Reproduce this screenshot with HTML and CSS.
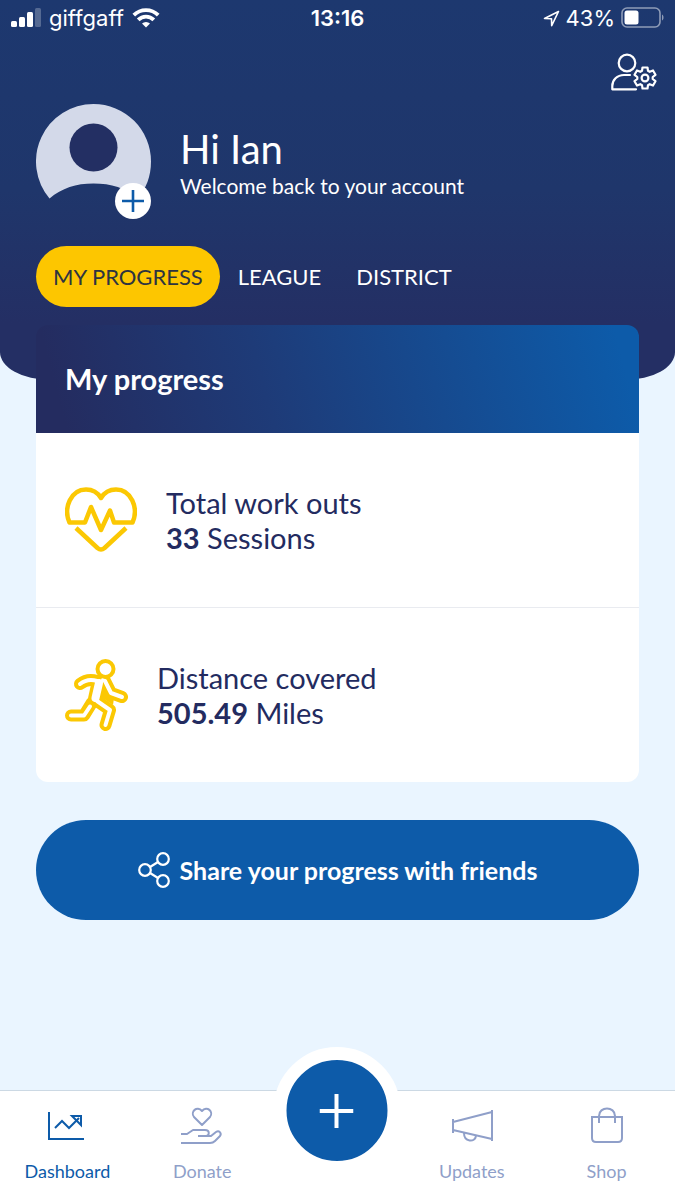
FILE: index.html
```html
<!DOCTYPE html>
<html lang="en">
  <head>
    <meta charset="utf-8">
    <meta name="viewport" content="width=device-width, initial-scale=1">
    <title>My progress</title>
    <link rel="stylesheet" href="styles.css">
  </head>
  <body>
    <header class="hero">
      <div class="status-bar">
        <div class="status-left">
          <svg width="30" height="20" viewBox="0 0 30 20" fill="#fff">
            <rect x="0" y="13" width="6" height="6" rx="1.5" />
            <rect x="8" y="9" width="6" height="10" rx="1.5" />
            <rect x="16" y="4" width="6" height="15" rx="1.5" />
            <rect x="24" y="0" width="6" height="19" rx="1.5" opacity="0.25" />
          </svg>
          <span>giffgaff</span>
          <svg width="28" height="20" viewBox="0 0 28 20" fill="none" stroke="#fff" stroke-width="3.8">
            <path d="M1.8 7.2a17.3 17.3 0 0 1 24.4 0" />
            <path d="M6.2 11.8a11 11 0 0 1 15.6 0" />
            <path d="M14 19.6l-4-4a5.7 5.7 0 0 1 8 0z" fill="#fff" stroke="none" />
          </svg>
        </div>
        <span class="clock">13:16</span>
        <div class="status-right">
          <svg width="17" height="17" viewBox="0 0 17 17" fill="none" stroke="#fff" stroke-width="1.6" stroke-linejoin="round">
            <path d="M15.5 1.5L1.5 8.5l7 .2.2 7z" />
          </svg>
          <span>43%</span>
          <svg width="43" height="22" viewBox="0 0 43 22" fill="none">
            <rect x="1" y="1" width="38" height="19" rx="5" stroke="#fff" stroke-opacity="0.5" stroke-width="1.6" />
            <rect x="3.5" y="3.5" width="14" height="14" rx="2.5" fill="#fff" />
            <path d="M41 7.5c2 1 2 5 0 6z" fill="#fff" fill-opacity="0.5" />
          </svg>
        </div>
      </div>

      <div class="toolbar">
        <button class="icon-button" type="button" aria-label="Account settings">
          <svg width="46" height="38" viewBox="0 0 46 38" fill="none" stroke="#fff" stroke-width="2.2" stroke-linecap="round" stroke-linejoin="round">
            <circle cx="16" cy="10" r="8.3" />
            <path d="M19 22h-6C6 22 1.3 27 1.3 33v3.3H25" />
            <path transform="translate(34 25)" d="M-2.5-10.5h5L3-7.2l1.7 1L8-7.5l2.5 4.3L7.7-1v2l2.8 2.2L8 7.5 4.7 6.2 3 7.2l-.5 3.3h-5L-3 7.2l-1.7-1L-8 7.5l-2.5-4.3L-7.7 1v-2l-2.8-2.2L-8-7.5l3.3 1.3 1.7-1z" />
            <circle cx="34" cy="25" r="3.4" />
          </svg>
        </button>
      </div>

      <div class="profile">
        <div class="avatar">
          <svg width="115" height="115" viewBox="0 0 115 115">
            <path d="M57.5 0A57.5 57.5 0 0 1 115 57.5c0 15-5 27-13 37C90 84 75 79.5 57.5 79.5S26 84 13.5 94.5A57.5 57.5 0 0 1 57.5 0z" fill="#d3d9e9" />
            <circle cx="57.5" cy="43.5" r="24" fill="#232f63" />
          </svg>
          <button class="avatar-add" type="button" aria-label="Add photo">
            <svg width="22" height="22" viewBox="0 0 22 22" stroke="#0d5ba9" stroke-width="2.6">
              <path d="M11 0v22M0 11h22" />
            </svg>
          </button>
        </div>
        <div>
          <h1>Hi Ian</h1>
          <p class="welcome">Welcome back to your account</p>
        </div>
      </div>

      <nav class="tabs">
        <a class="tab active" href="#progress">MY PROGRESS</a>
        <a class="tab" href="#league">LEAGUE</a>
        <a class="tab" href="#district">DISTRICT</a>
      </nav>
    </header>

    <main>
      <section class="card" id="progress">
        <h2>My progress</h2>
        <div class="stat">
          <svg width="72" height="72" viewBox="0 0 72 72" fill="none" stroke="#fbc803" stroke-width="4.5" stroke-linejoin="round">
            <path d="M4.5 38.5C-2 24 6 5.5 21 5.5c7 0 12 3.5 15 8.5 3-5 8-8.5 15-8.5 15 0 23 18.5 16.5 33H49L45 26.5 36 46 26 23l-6 15.5z" />
            <path d="M11 44l21.5 20q3.5 3 7 0L61 44" />
          </svg>
          <p>Total work outs<br><strong>33</strong> Sessions</p>
        </div>
        <div class="stat">
          <svg width="63" height="72" viewBox="0 0 63 72" fill="none" stroke-linejoin="round" stroke-linecap="round">
            <g stroke="#fbc803" stroke-width="12">
              <path d="M15 25c5-4 11-5 17-3" />
              <path d="M40 22l6 12 11 4" />
              <path d="M6 56.5h13l8-13" />
              <path d="M32 42l13 9-4.5 15" />
              <path d="M35 24l-3.500 16" stroke-width="17" />
            </g>
            <path d="M39 28v12l9 6 1-7-4-5z" fill="#fbc803" />
            <g stroke="#fff" stroke-width="4">
              <path d="M15 25c5-4 11-5 17-3" />
              <path d="M38 21l2 1 6 12 11 4" />
              <path d="M6 56.5h13l6-9" />
              <path d="M32 42l13 9-4.5 15" />
              <path d="M34 24l-3.500 15" stroke-width="8" />
            </g>
            <circle cx="40.5" cy="10" r="8" fill="#fff" stroke="#fbc803" stroke-width="4" />
          </svg>
          <p>Distance covered<br><strong>505.49</strong> Miles</p>
        </div>
      </section>

      <button class="share" type="button">
        <svg width="32" height="36" viewBox="0 0 32 36" fill="none" stroke="#fff" stroke-width="2.2">
          <circle cx="7" cy="18" r="5.8" />
          <circle cx="25" cy="7" r="5.8" />
          <circle cx="25" cy="29" r="5.8" />
          <path d="M12 15l8-5M12 21l8 5" />
        </svg>
        Share your progress with friends
      </button>
    </main>

    <nav class="bottom-nav">
      <a class="nav-item active" href="#dashboard">
        <svg width="42" height="38" viewBox="0 0 42 38" fill="none" stroke="currentColor" stroke-width="2">
          <path d="M3 5v27h35" />
          <path d="M9 21l7-7 7 7 10-10" />
          <path d="M26 9h9v9z" />
        </svg>
        Dashboard
      </a>
      <a class="nav-item" href="#donate">
        <svg width="42" height="38" viewBox="0 0 42 38" fill="none" stroke="currentColor" stroke-width="2" stroke-linejoin="round">
          <path d="M21 18l-8-8c-4-5 3-12 8-6 5-6 12 1 8 6z" />
          <path d="M0 27h6l6-4h12c5 0 5 6 0 6h-7M26 29h4l5-4c3-2 6 1 4 4l-5 5c-1 1-3 2-5 2H0" />
        </svg>
        Donate
      </a>
      <div class="nav-middle">
        <button class="add-button" type="button" aria-label="Add activity">
          <svg width="34" height="34" viewBox="0 0 34 34" stroke="#fff" stroke-width="4">
            <path d="M17 0v34M0 17h34" />
          </svg>
        </button>
      </div>
      <a class="nav-item" href="#updates">
        <svg width="42" height="38" viewBox="0 0 42 38" fill="none" stroke="currentColor" stroke-width="2">
          <path d="M2 12v14M41 3v31M2 15l39-10M2 23l39 9" />
          <path d="M13 26c0 9 11 10 12 3" />
        </svg>
        Updates
      </a>
      <a class="nav-item" href="#shop">
        <svg width="42" height="38" viewBox="0 0 42 38" fill="none" stroke="currentColor" stroke-width="2">
          <path d="M6 10h30v21q0 4-4 4H10q-4 0-4-4z" />
          <path d="M13 16V9c0-10 16-10 16 0v7" />
        </svg>
        Shop
      </a>
    </nav>
  </body>
</html>
```
FILE: styles.css
```css
* {
  box-sizing: border-box;
}

body {
  margin: 0;
  min-height: 100vh;
  display: flex;
  flex-direction: column;
  font-family: Lato, sans-serif;
  background-color: #eaf5ff;
  color: #232b60;
}

h1,
h2,
p {
  margin: 0;
  font-weight: normal;
}

a {
  text-decoration: none;
}

button {
  border: none;
  padding: 0;
  font-family: inherit;
  cursor: pointer;
}

svg {
  display: block;
  flex: none;
}

.hero {
  padding-bottom: 73px;
  color: #fff;
  background: linear-gradient(#1d386f, #1f366b 50%, #242f64 85%);
  border-radius: 0 0 50px 50px / 0 0 28px 28px;
}

.status-bar {
  display: grid;
  grid-template-columns: 1fr auto 1fr;
  align-items: center;
  height: 36px;
  padding: 0 11px;
  font-family: Inter, sans-serif;
  font-size: 22px;
}

.status-left,
.status-right {
  display: flex;
  align-items: center;
  gap: 8px;
}

.status-right {
  justify-content: flex-end;
  gap: 6px;
}

.clock {
  font-weight: 600;
}

.toolbar {
  display: flex;
  justify-content: flex-end;
  padding: 17px 18px 0;
}

.icon-button {
  background: none;
}

.profile {
  display: flex;
  align-items: center;
  gap: 29px;
  padding: 13px 36px 0;
}

.avatar {
  position: relative;
}

.avatar-add {
  position: absolute;
  right: 0;
  bottom: 0;
  width: 36px;
  height: 36px;
  display: grid;
  place-items: center;
  border-radius: 50%;
  background-color: #fff;
}

h1 {
  font-size: 40px;
  line-height: 48px;
}

.welcome {
  font-size: 21px;
  line-height: 26px;
}

.tabs {
  display: flex;
  gap: 1px;
  padding: 27px 36px 0;
}

.tab {
  padding: 0 17px;
  border-radius: 31px;
  font-size: 22px;
  line-height: 61px;
  color: #fff;
}

.tab.active {
  background-color: #fdc600;
  color: #2e3440;
}

main {
  flex: 1;
  margin-top: -55px;
  padding: 0 36px 36px;
}

h2 {
  padding: 0 29px;
  border-radius: 12px 12px 0 0;
  font-size: 29px;
  font-weight: bold;
  line-height: 108px;
  color: #fff;
  background: linear-gradient(75deg, #242c60 5%, #1e3b78 38%, #0d5ba9 96%);
}

.stat {
  display: flex;
  align-items: center;
  gap: 29px;
  height: 174px;
  padding: 0 29px;
  font-size: 29px;
  line-height: 35px;
  background-color: #fff;
}

.stat + .stat {
  height: 175px;
  border-top: 1px solid #e9ebf0;
  border-radius: 0 0 12px 12px;
}

.share {
  display: flex;
  align-items: center;
  justify-content: center;
  gap: 10px;
  width: 100%;
  height: 100px;
  margin-top: 38px;
  border-radius: 50px;
  font-size: 25px;
  font-weight: bold;
  color: #fff;
  background-color: #0d5ba9;
}

.bottom-nav {
  display: grid;
  grid-template-columns: repeat(5, 1fr);
  height: 110px;
  padding-right: 1px;
  border-top: 1px solid #ccd9e4;
  background-color: #fff;
}

.nav-item {
  display: flex;
  flex-direction: column;
  align-items: center;
  gap: 14px;
  padding-top: 16px;
  font-size: 18px;
  line-height: 24px;
  color: #8f9fc9;
}

.nav-item.active {
  color: #0d5ba9;
}

.nav-middle {
  position: relative;
}

/* round button sits over the top edge of the bar */
.add-button {
  position: absolute;
  top: -44px;
  left: 50%;
  width: 127px;
  height: 127px;
  transform: translateX(-50%);
  display: grid;
  place-items: center;
  border: 13px solid #fff;
  border-radius: 50%;
  background-color: #0d5ba9;
}
```
